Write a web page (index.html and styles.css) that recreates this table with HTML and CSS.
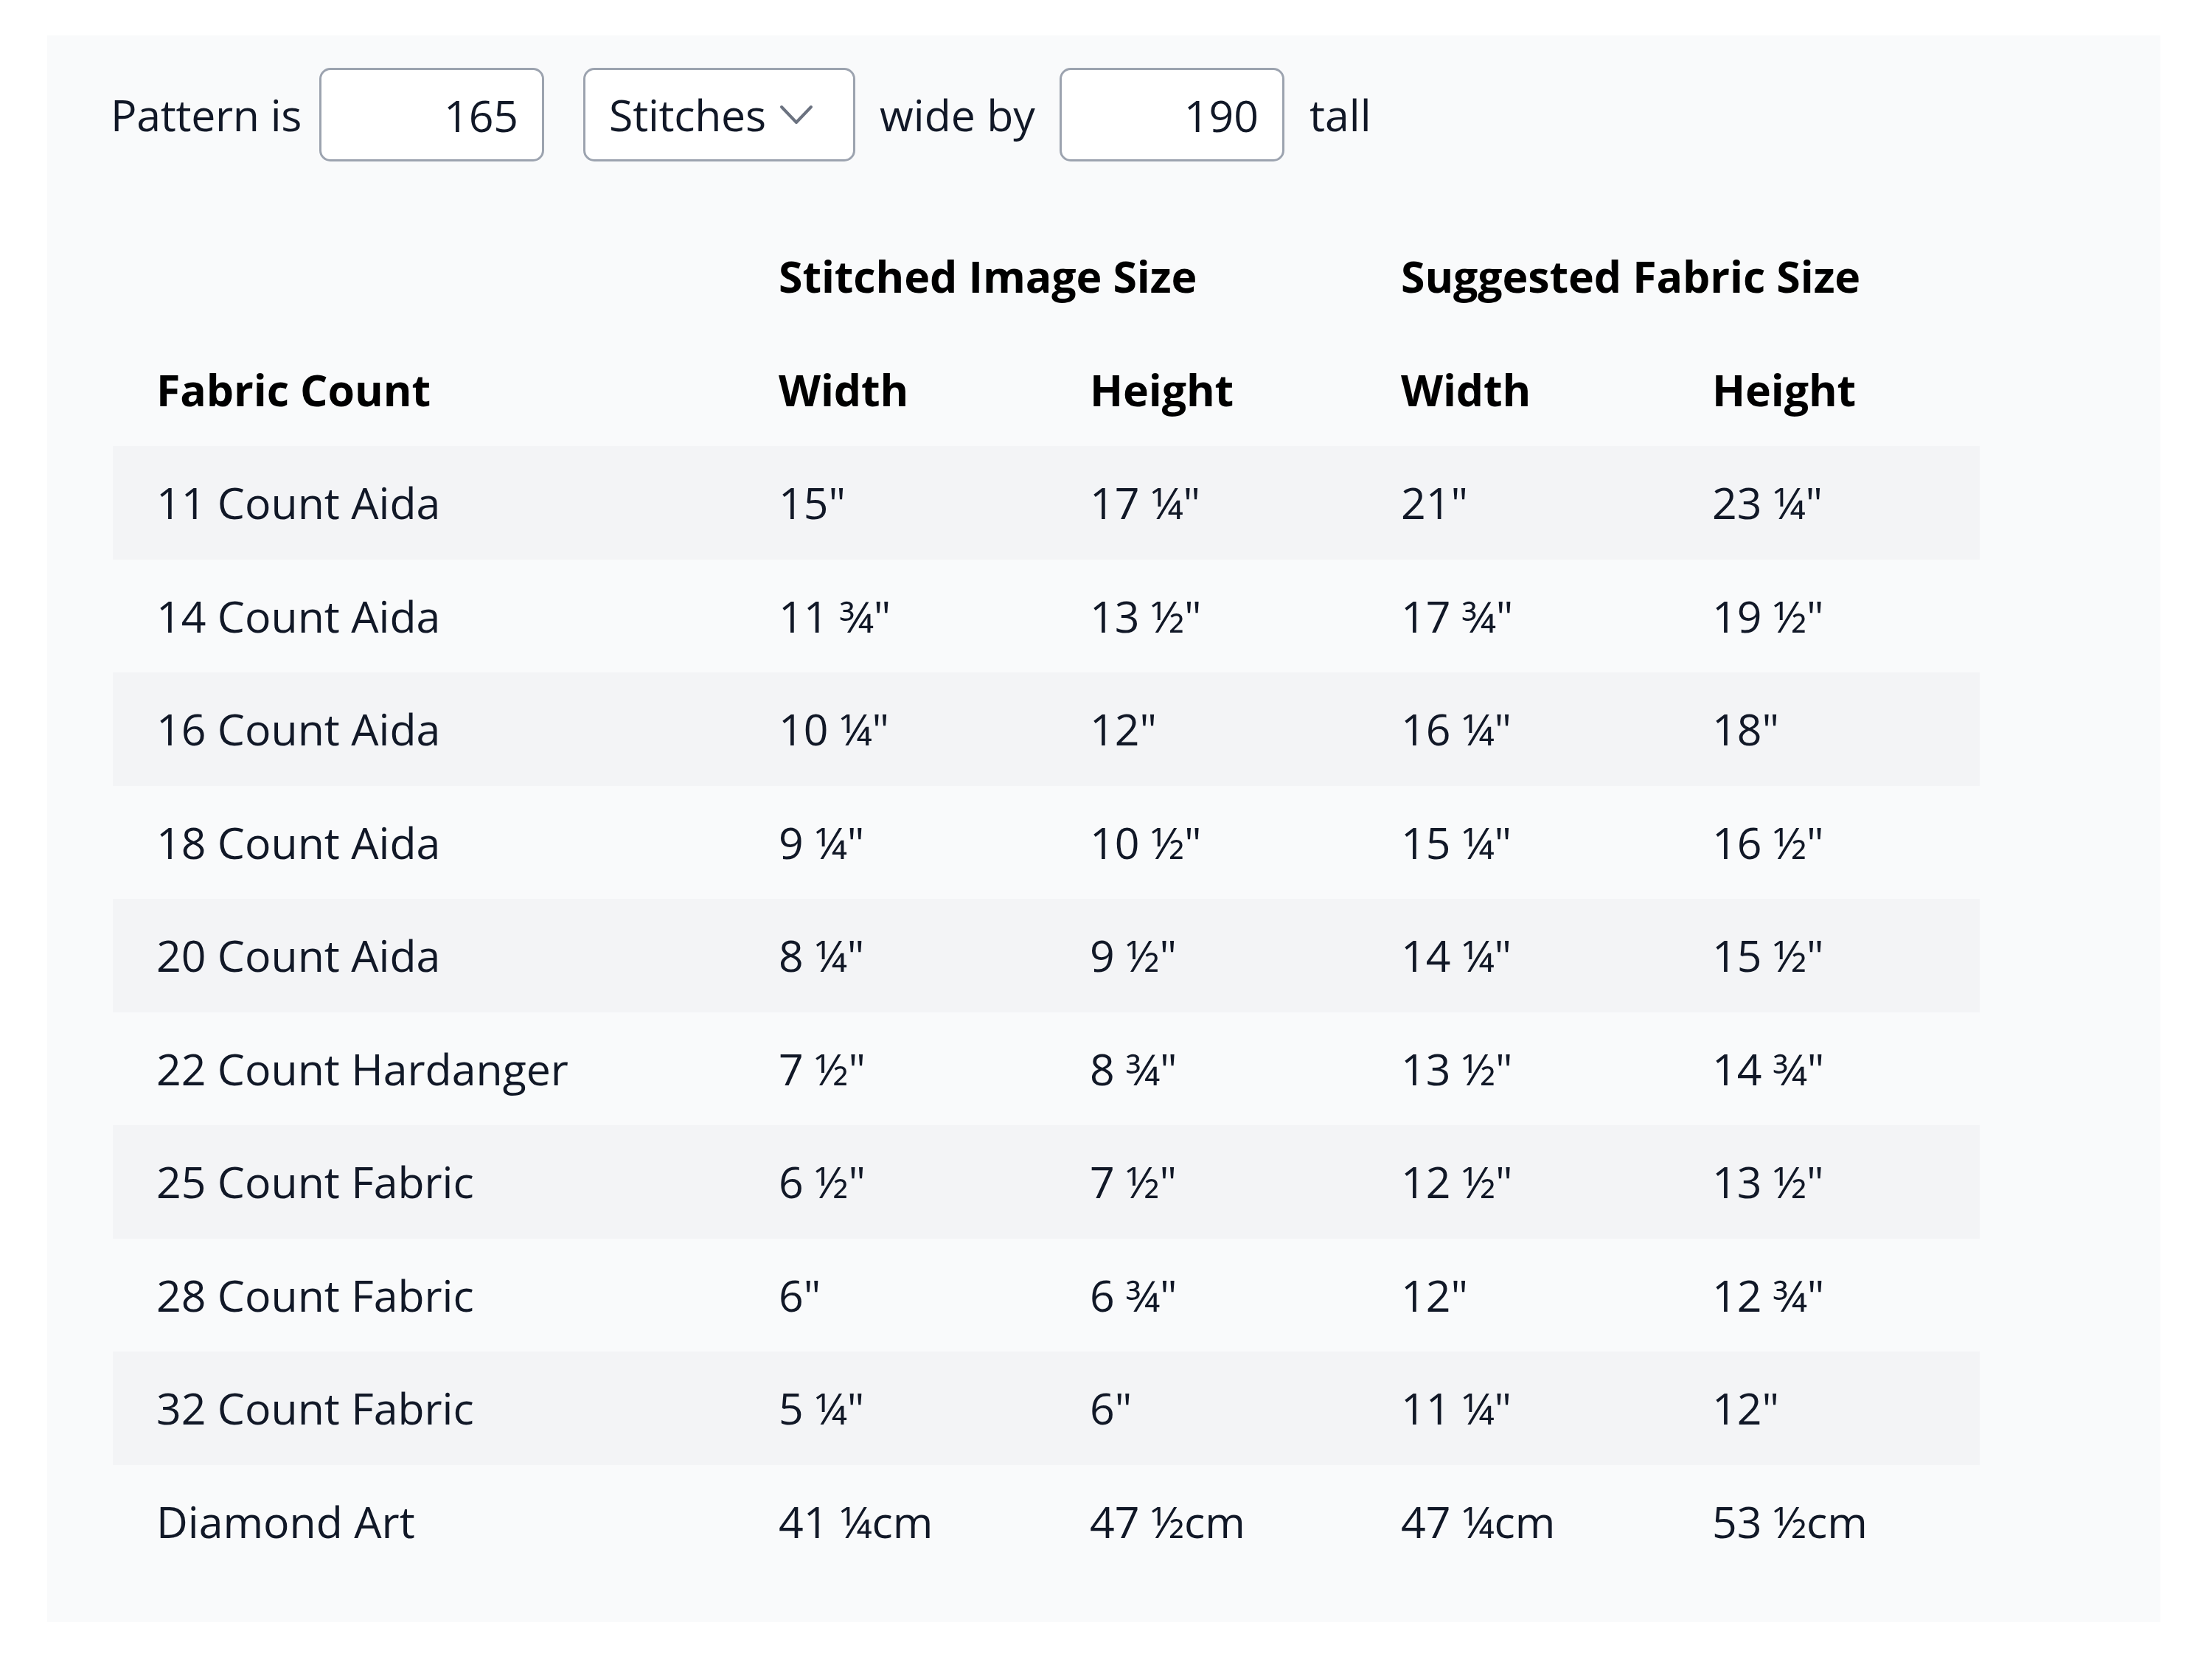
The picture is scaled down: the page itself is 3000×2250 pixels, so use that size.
FILE: index.html
```html
<!DOCTYPE html>
<html lang="en">
<head>
<meta charset="utf-8">
<title>Fabric Size Calculator</title>
<link rel="stylesheet" href="styles.css">
</head>
<body>
<div class="panel">
  <div class="controls">
    <span class="lbl lbl-pattern">Pattern is</span>
    <input class="num num-wide" type="text" value="165">
    <div class="select">
      <span>Stitches</span>
      <svg class="chev" width="46" height="28" viewBox="0 0 46 28"><path d="M3 3 L23 24 L43 3" fill="none" stroke="#6b7280" stroke-width="4" stroke-linecap="round" stroke-linejoin="round"/></svg>
    </div>
    <span class="lbl lbl-wide">wide by</span>
    <input class="num num-tall" type="text" value="190">
    <span class="lbl">tall</span>
  </div>
  <table class="sizes">
    <colgroup>
      <col class="c-name"><col class="c-val"><col class="c-val"><col class="c-val"><col class="c-val">
    </colgroup>
    <thead>
      <tr><th></th><th colspan="2">Stitched Image Size</th><th colspan="2">Suggested Fabric Size</th></tr>
      <tr><th>Fabric Count</th><th>Width</th><th>Height</th><th>Width</th><th>Height</th></tr>
    </thead>
    <tbody>
      <tr><td>11 Count Aida</td><td>15"</td><td>17 ¼"</td><td>21"</td><td>23 ¼"</td></tr>
      <tr><td>14 Count Aida</td><td>11 ¾"</td><td>13 ½"</td><td>17 ¾"</td><td>19 ½"</td></tr>
      <tr><td>16 Count Aida</td><td>10 ¼"</td><td>12"</td><td>16 ¼"</td><td>18"</td></tr>
      <tr><td>18 Count Aida</td><td>9 ¼"</td><td>10 ½"</td><td>15 ¼"</td><td>16 ½"</td></tr>
      <tr><td>20 Count Aida</td><td>8 ¼"</td><td>9 ½"</td><td>14 ¼"</td><td>15 ½"</td></tr>
      <tr><td>22 Count Hardanger</td><td>7 ½"</td><td>8 ¾"</td><td>13 ½"</td><td>14 ¾"</td></tr>
      <tr><td>25 Count Fabric</td><td>6 ½"</td><td>7 ½"</td><td>12 ½"</td><td>13 ½"</td></tr>
      <tr><td>28 Count Fabric</td><td>6"</td><td>6 ¾"</td><td>12"</td><td>12 ¾"</td></tr>
      <tr><td>32 Count Fabric</td><td>5 ¼"</td><td>6"</td><td>11 ¼"</td><td>12"</td></tr>
      <tr><td>Diamond Art</td><td>41 ¼cm</td><td>47 ½cm</td><td>47 ¼cm</td><td>53 ½cm</td></tr>
    </tbody>
  </table>
</div>
</body>
</html>
```
FILE: styles.css
```css
html, body {
  margin: 0;
  padding: 0;
  background: #ffffff;
}

body {
  font-family: "Open Sans", "Noto Sans", sans-serif;
  font-size: 59px;
  color: #111827;
}

.panel {
  margin: 48px 0 0 64px;
  width: 2866px;
  box-sizing: border-box;
  background: #f9fafb;
  padding: 44px 0 60px 86px;
}

.controls {
  display: flex;
  align-items: center;
  height: 127px;
}

.lbl {
  line-height: 1;
  white-space: nowrap;
}

.lbl-pattern { margin-right: 24px; letter-spacing: -0.3px; }
.lbl-wide { margin-right: 33px; }

.num {
  box-sizing: border-box;
  width: 305px;
  height: 127px;
  border: 3px solid #9ca3af;
  border-radius: 15px;
  background: #ffffff;
  font-family: inherit;
  font-size: 59px;
  color: #111827;
  text-align: right;
  padding: 0 32px 0 10px;
  margin: 0;
  outline: none;
}

.num-wide { margin-right: 53px; }
.num-tall { margin-right: 34px; }

.select {
  box-sizing: border-box;
  width: 369px;
  height: 127px;
  border: 3px solid #9ca3af;
  border-radius: 15px;
  background: #ffffff;
  display: flex;
  align-items: center;
  padding: 0 54px 0 32px;
  margin-right: 33px;
  line-height: 1;
  letter-spacing: -0.3px;
}

.chev {
  margin-left: auto;
  display: block;
}

.sizes {
  margin: 79px 0 0 3px;
  width: 2532px;
  table-layout: fixed;
  border-collapse: collapse;
  border-spacing: 0;
}

.c-name { width: 844px; }
.c-val { width: 422px; }

.sizes th,
.sizes td {
  height: 153.5px;
  padding: 0 0 0 59px;
  text-align: left;
  vertical-align: middle;
  line-height: 1;
  white-space: nowrap;
}

.sizes th {
  font-weight: 700;
  letter-spacing: -0.1px;
  color: #000000;
}

.sizes tbody tr:nth-child(odd) {
  background: #f3f4f6;
}
```
